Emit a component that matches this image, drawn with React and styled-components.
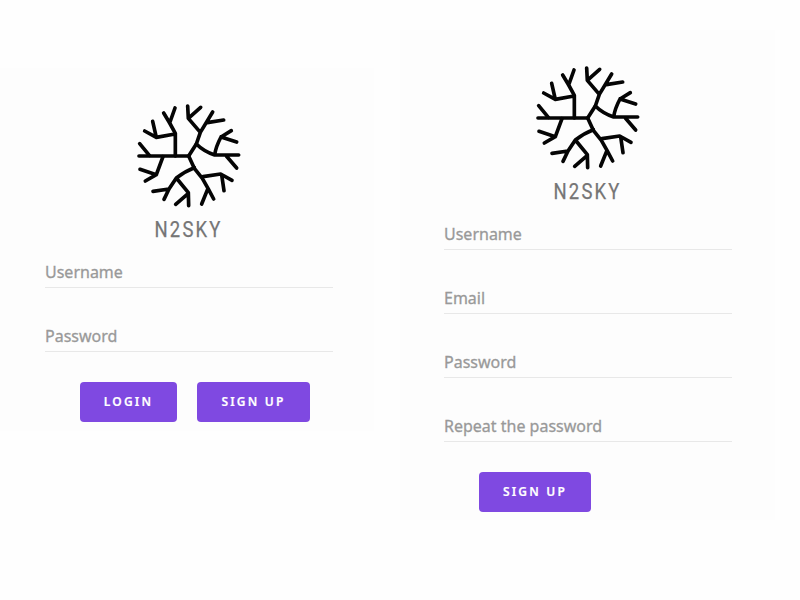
import React from 'react';
import styled, { createGlobalStyle } from 'styled-components';

const GlobalStyle = createGlobalStyle`
  * { box-sizing: border-box; }
  body { margin: 0; background: #fefefe; font-family: "Noto Sans", "Open Sans", sans-serif; }
`;

const Page = styled.main`
  width: 800px;
  height: 600px;
  display: flex;
  align-items: flex-start;
  gap: 26px;
  overflow: hidden;
`;

const Panel = styled.form`
  width: ${p => p.$width}px;
  height: ${p => p.$height}px;
  margin-top: ${p => p.$top}px;
  padding: 30px 0 0 ${p => p.$inset}px;
  background: #fdfdfd;
  display: flex;
  flex-direction: column;
`;

const Brand = styled.header`
  width: 288px;
  height: 152px;
  display: flex;
  flex-direction: column;
  align-items: center;
`;

const Mark = styled.svg`
  width: 120px;
  height: 117px;
  flex: none;
  fill: none;
  stroke: #050505;
  stroke-width: 11;
  stroke-linecap: round;
  stroke-linejoin: round;
`;

const Title = styled.h1`
  margin: 0;
  font: 400 22px/30px Roboto, "Noto Sans", sans-serif;
  letter-spacing: 2.6px;
  color: #757575;
  -webkit-text-stroke: 0.25px #757575;
  transform: scaleX(0.84);
`;

const Field = styled.label`
  width: 288px;
  height: 38px;
  margin-bottom: 26px;
  padding-top: 11px;
  border-bottom: 1px solid #e8e8e8;
  color: #999;
  font-size: 16px;
  line-height: 22px;
  -webkit-text-stroke: 0.3px #999;
`;

const Actions = styled.div`
  display: flex;
  gap: 20px;
  padding: 4px 0 0 35px;
`;

const Button = styled.button`
  width: ${p => p.$width}px;
  height: 40px;
  padding: 0 0 1px;
  border: 0;
  border-radius: 4px;
  background: #7f49e1;
  color: #fff;
  font: 600 12px/20px "Noto Sans", sans-serif;
  letter-spacing: 2.2px;
  -webkit-text-stroke: 0.2px #fff;
  text-transform: uppercase;
`;

const Logo = () => (
  <Brand>
    <Mark viewBox="11 0 360 351" aria-hidden="true">
      <path d="M41 174H190L213 138L225 103L262 42M246 74L295 66M225 103L189 61L187 24M189 61L226 28" />
      <path d="M150 174V106L133 75L115 45M133 75L149 30M149 108L93 118L58 99M93 118L82 70M72 172L43 137" />
      <path d="M113 176L93 230L44 214M93 230L60 249" />
      <path d="M213 138Q235 160 268 171L340 171M268 170Q272 145 287 117L318 98M287 117L334 132M303 174L334 210" />
      <path d="M190 174L207 211L231 241L248 271L265 303M248 271L229 318M233 236L286 228L320 247M289 230L296 278" />
      <path d="M207 209Q180 219 153 240L131 273L116 304M131 273L83 280M153 240L189 284L190 323M189 286L151 319" />
    </Mark>
    <Title>N2SKY</Title>
  </Brand>
);

const forms = [
  { width: 374, height: 363, top: 68, inset: 45, fields: ['Username', 'Password'], actions: [['Login', 97], ['Sign up', 113]] },
  { width: 375, height: 490, top: 30, inset: 44, fields: ['Username', 'Email', 'Password', 'Repeat the password'], actions: [['Sign up', 112]] },
];

export default function App() {
  return (
    <>
      <GlobalStyle />
      <Page>
        {forms.map(f => (
          <Panel key={f.top} $width={f.width} $height={f.height} $top={f.top} $inset={f.inset}>
            <Logo />
            {f.fields.map(name => <Field key={name}>{name}</Field>)}
            <Actions>
              {f.actions.map(([name, width]) => <Button type="button" key={name} $width={width}>{name}</Button>)}
            </Actions>
          </Panel>
        ))}
      </Page>
    </>
  );
}
